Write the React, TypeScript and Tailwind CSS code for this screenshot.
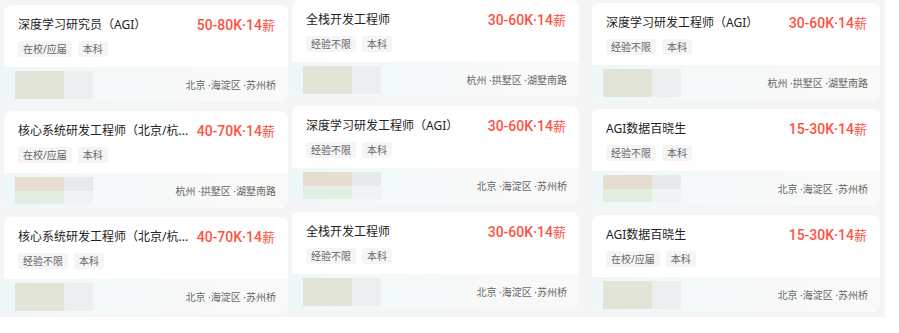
import React from "react";

type Img = "two" | "quad";
type Job = {
  title: string;
  salary: string;
  tags: string[];
  loc: string;
  img: Img;
};

const BJ = "北京 ·海淀区 ·苏州桥";
const HZ = "杭州 ·拱墅区 ·湖墅南路";
const LONG = "核心系统研发工程师（北京/杭...";

const col1: Job[] = [
  { title: "深度学习研究员（AGI）", salary: "50-80K·14", tags: ["在校/应届", "本科"], loc: BJ, img: "two" },
  { title: LONG, salary: "40-70K·14", tags: ["在校/应届", "本科"], loc: HZ, img: "quad" },
  { title: LONG, salary: "40-70K·14", tags: ["经验不限", "本科"], loc: BJ, img: "two" },
];
const col2: Job[] = [
  { title: "全栈开发工程师", salary: "30-60K·14", tags: ["经验不限", "本科"], loc: HZ, img: "two" },
  { title: "深度学习研发工程师（AGI）", salary: "30-60K·14", tags: ["经验不限", "本科"], loc: BJ, img: "quad" },
  { title: "全栈开发工程师", salary: "30-60K·14", tags: ["经验不限", "本科"], loc: BJ, img: "two" },
];
const col3: Job[] = [
  { title: "深度学习研发工程师（AGI）", salary: "30-60K·14", tags: ["经验不限", "本科"], loc: HZ, img: "two" },
  { title: "AGI数据百晓生", salary: "15-30K·14", tags: ["经验不限", "本科"], loc: BJ, img: "quad" },
  { title: "AGI数据百晓生", salary: "15-30K·14", tags: ["在校/应届", "本科"], loc: BJ, img: "two" },
];

const FONT = '"Noto Sans", "Noto Sans CJK SC", sans-serif';

function Thumb({ kind }: { kind: Img }) {
  if (kind === "two") {
    return (
      <div className="flex h-[28px]">
        <div className="w-[49px] h-full bg-[#e2e4d7]" />
        <div className="w-[29px] h-full bg-[#ebeff0]" />
      </div>
    );
  }
  return (
    <div className="flex flex-col h-[27px]">
      <div className="flex h-[14px]">
        <div className="w-[49px] h-full bg-[#e4ddd0]" />
        <div className="w-[29px] h-full bg-[#e7eaeb]" />
      </div>
      <div className="flex h-[13px]">
        <div className="w-[49px] h-full bg-[#e2eee2]" />
        <div className="w-[29px] h-full bg-[#eff3f3]" />
      </div>
    </div>
  );
}

function Card({ job }: { job: Job }) {
  return (
    <div className="h-[97px] rounded-[8px] bg-white overflow-hidden flex flex-col">
      <div className="pt-[10px] pl-[14px] pr-[13px]">
        <div className="flex items-center h-[20px] gap-[8px]">
          <div
            className="flex-1 min-w-0 whitespace-nowrap overflow-hidden text-[12px] leading-[20px] text-[#222222]"
            style={{ fontFamily: FONT }}
          >
            {job.title}
          </div>
          <div className="shrink-0 flex items-baseline text-[#fd5346]">
            <span
              className="text-[14px] leading-[20px] font-medium"
              style={{ fontFamily: 'Roboto, "Noto Sans", sans-serif' }}
            >
              {job.salary}
            </span>
            <span
              className="text-[13px] leading-[20px]"
              style={{ fontFamily: '"Noto Sans CJK SC", sans-serif' }}
            >
              薪
            </span>
          </div>
        </div>
        <div className="flex gap-[6px] mt-[6px]">
          {job.tags.map((t) => (
            <span
              key={t}
              className="h-[16px] px-[5px] rounded-[3px] bg-[#f5f5f6] text-[10px] leading-[16px] text-[#666666]"
              style={{ fontFamily: FONT }}
            >
              {t}
            </span>
          ))}
        </div>
      </div>
      <div className="mt-auto h-[35px] flex items-center justify-between pl-[11px] pr-[12px] bg-linear-to-r from-[#eef8f8] via-[#f6f9f9] to-[#faf9f8]">
        <Thumb kind={job.img} />
        <span
          className="text-[10px] leading-[14px] text-[#666666]"
          style={{ fontFamily: FONT }}
        >
          {job.loc}
        </span>
      </div>
    </div>
  );
}

function Column({ jobs, className }: { jobs: Job[]; className: string }) {
  return (
    <div className={`flex flex-col gap-[9px] ${className}`}>
      {jobs.map((j, i) => (
        <Card key={i} job={j} />
      ))}
    </div>
  );
}

export default function App() {
  return (
    <div className="w-[899px] h-[333px] bg-white overflow-hidden">
      <div className="w-[885px] h-[317px] bg-[#f4f5f7] overflow-hidden flex items-start pl-[4px]">
        <Column jobs={col1} className="w-[284px] mt-[5px]" />
        <Column jobs={col2} className="w-[287px] ml-[4px] mt-0" />
        <Column jobs={col3} className="w-[288px] ml-[13px] mt-[3px]" />
      </div>
    </div>
  );
}
